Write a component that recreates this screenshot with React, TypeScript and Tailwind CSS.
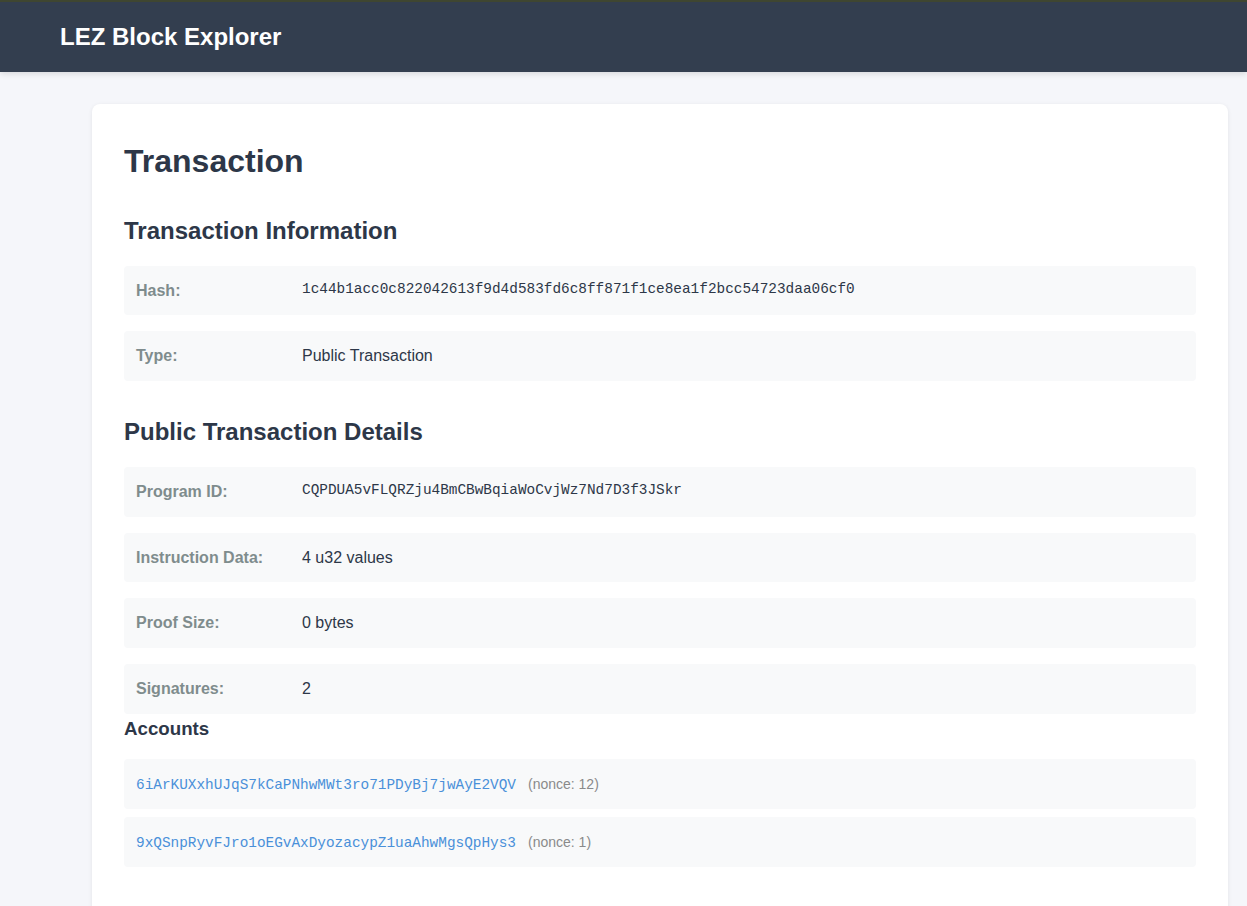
const sans = "font-['Liberation_Sans',Arial,sans-serif]";
const mono = "font-['Liberation_Mono','Courier_New',monospace]";

type Row = { label: string; value: string; code?: boolean };

const txInfo: Row[] = [
  { label: 'Hash:', value: '1c44b1acc0c822042613f9d4d583fd6c8ff871f1ce8ea1f2bcc54723daa06cf0', code: true },
  { label: 'Type:', value: 'Public Transaction' },
];

const publicDetails: Row[] = [
  { label: 'Program ID:', value: 'CQPDUA5vFLQRZju4BmCBwBqiaWoCvjWz7Nd7D3f3JSkr', code: true },
  { label: 'Instruction Data:', value: '4 u32 values' },
  { label: 'Proof Size:', value: '0 bytes' },
  { label: 'Signatures:', value: '2' },
];

const accounts = [
  { id: '6iArKUXxhUJqS7kCaPNhwMWt3ro71PDyBj7jwAyE2VQV', nonce: 12 },
  { id: '9xQSnpRyvFJro1oEGvAxDyozacypZ1uaAhwMgsQpHys3', nonce: 1 },
];

function InfoRow({ row, last }: { row: Row; last?: boolean }) {
  return (
    <div className={`flex items-start rounded bg-[#f8f9fa] px-3 py-3 leading-[1.6] ${last ? '' : 'mb-4'}`}>
      <span className="w-[166px] shrink-0 font-bold text-[#7f8c8d]">{row.label}</span>
      {row.code ? (
        <code className={`${mono} text-[14.4px] text-[#2d3748]`}>{row.value}</code>
      ) : (
        <span className="text-[#2d3748]">{row.value}</span>
      )}
    </div>
  );
}

export default function App() {
  return (
    <div className={`${sans} min-h-[906px] bg-[#f5f6fa] text-base text-[#2d3748]`}>
      <header className="h-[72px] border-t-2 border-[#3f4631] bg-[#333e4f] shadow-[0_2px_6px_rgba(0,0,0,0.12)]">
        <div className="flex h-full items-center pl-[60px]">
          <h1 className="text-2xl font-bold text-white">LEZ Block Explorer</h1>
        </div>
      </header>

      <main className="ml-[92px] mr-[19px] pb-8 pt-8">
        <div className="rounded-lg bg-white px-8 pb-12 pt-8 shadow-[0_1px_4px_rgba(0,0,0,0.08)]">
          <h1 className="mb-[25px] text-[32px] font-bold leading-[1.6] text-[#2d3748]">Transaction</h1>

          <h2 className="mb-[15px] text-2xl font-bold leading-[1.6]">Transaction Information</h2>
          {txInfo.map((r) => (
            <InfoRow key={r.label} row={r} />
          ))}

          <h2 className="mb-4 mt-8 text-2xl font-bold leading-[1.6]">Public Transaction Details</h2>
          {publicDetails.map((r, i) => (
            <InfoRow key={r.label} row={r} last={i === publicDetails.length - 1} />
          ))}

          <h3 className="mb-4 text-[18.72px] font-bold leading-[1.6]">Accounts</h3>
          <div className="flex flex-col gap-[8px]">
            {accounts.map((a) => (
              <div key={a.id} className="flex items-baseline rounded bg-[#f8f9fa] px-3 pb-[10px] pt-[14px] leading-[25.6px]">
                <a className={`${mono} text-[14.4px] text-[#4a90d9]`}>{a.id}</a>
                <span className="ml-3 text-sm text-[#8a8a8a]">(nonce: {a.nonce})</span>
              </div>
            ))}
          </div>
        </div>
      </main>
    </div>
  );
}
